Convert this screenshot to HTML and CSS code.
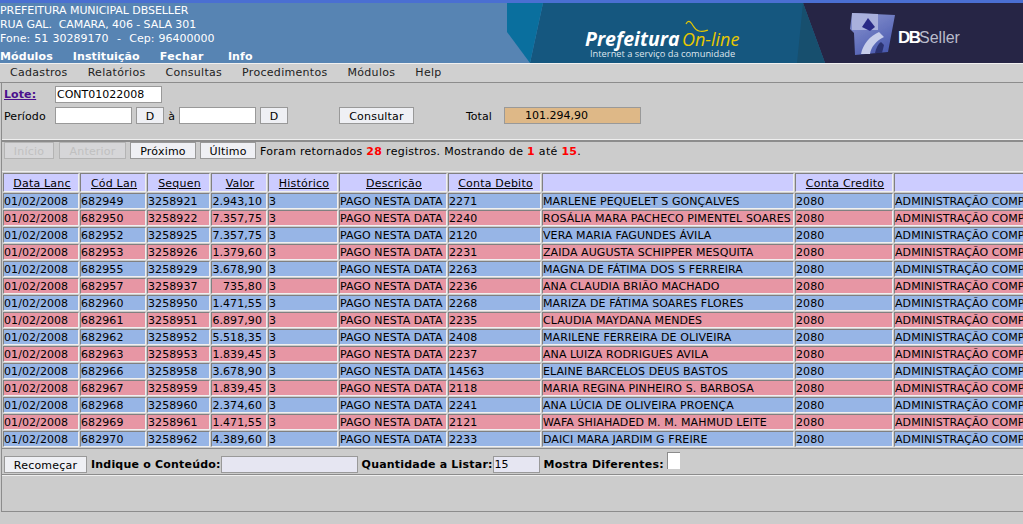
FILE: index.html
```html
<!DOCTYPE html>
<html lang="pt-BR">
<head>
  <meta charset="UTF-8" />
  <title>Prefeitura On-line</title>
  <link rel="stylesheet" href="styles.css">
</head>
<body>
  <div class="topo">
    <div class="topo-info">
      <div class="endereco">
        <div>PREFEITURA MUNICIPAL DBSELLER</div>
        <div>RUA GAL. &nbsp;CAMARA, 406 - SALA 301</div>
        <div class="fone">Fone: 51 30289170 &nbsp;-&nbsp; Cep: 96400000</div>
      </div>
      <div class="menu-topo">
        <span>Módulos</span><span>Instituição</span><span>Fechar</span><span>Info</span>
      </div>
    </div>
    <svg class="banner" width="517" height="60" viewBox="0 0 517 60">
      <defs>
        <filter id="suave"><feGaussianBlur stdDeviation="0.6"/></filter>
        <linearGradient id="logo" x1="0" y1="0" x2="0.6" y2="1">
          <stop offset="0" stop-color="#8e98d2"/>
          <stop offset="1" stop-color="#4c5cb0"/>
        </linearGradient>
      </defs>
      <polygon points="37,0 297,0 319,60 24,60" fill="#15577f"/>
      <polygon points="1,0 37,0 24,60 1,29" fill="#0a6f9e"/>
      <polygon points="297,0 517,0 517,60 319,60" fill="#262545"/>
      <polygon points="297,0 319,60 291,60" fill="#174f6e"/>
      <text x="79" y="43" class="b-pref">Prefeitura</text>
      <text x="176" y="43" class="b-online">On-line</text>
      <path d="M180 21c2-4 4-3 6 0s3 6 7 7 6 0 9-1" fill="none" stroke="#e8c800" stroke-width="1.2"/>
      <text x="84" y="54" class="b-sub">Internet a serviço da comunidade</text>
      <g filter="url(#suave)">
        <polygon points="346,10 389,12 382,49 349,52 348,30 344,26" fill="url(#logo)"/>
        <polygon points="346,10 372,11 372,27 346,27" fill="#a9b0dc"/>
        <polygon points="362,15 369,24 364,28 356,24" fill="#2b2b86"/>
        <path d="M355 51c2-10 9-18 18-22l5 5c-8 4-13 10-14 17z" fill="#c6cdea"/>
        <path d="M369 50c1-5 3-9 6-11l3 3-2 8z" fill="#2c3270"/>
      </g>
      <text x="392" y="40" class="b-db">DB</text>
      <text x="413" y="40" class="b-seller">Seller</text>
    </svg>
  </div>

  <div class="menu">
    <span>Cadastros</span><span>Relatórios</span><span>Consultas</span><span>Procedimentos</span><span>Módulos</span><span>Help</span>
  </div>

  <div class="conteudo">
    <form class="filtro">
      <div class="linha">
        <a class="rotulo lote" href="#">Lote:</a>
        <input class="campo c-lote" value="CONT01022008">
      </div>
      <div class="linha">
        <span class="rotulo desce">Período</span>
        <input class="campo c-data">
        <button type="button" class="btn btn-d">D</button>
        <span class="a-sep desce">à</span>
        <input class="campo c-data">
        <button type="button" class="btn btn-d">D</button>
        <button type="button" class="btn btn-consultar">Consultar</button>
        <span class="total-rotulo desce">Total</span>
        <input class="campo c-total" value="101.294,90">
      </div>
    </form>

    <div class="lista">
      <div class="paginas">
        <button type="button" class="btn off b-inicio">Início</button>
        <button type="button" class="btn off b-anterior">Anterior</button>
        <button type="button" class="btn b-proximo">Próximo</button>
        <button type="button" class="btn b-ultimo">Último</button>
        <span class="resumo">Foram retornados <b>28</b> registros. Mostrando de <b>1</b> até <b>15</b>.</span>
      </div>

      <div class="tabela-box">
        <table class="tabela">
          <thead>
            <tr>
              <th class="w1"><u>Data Lanc</u></th>
              <th class="w2"><u>Cód Lan</u></th>
              <th class="w3"><u>Sequen</u></th>
              <th class="w4"><u>Valor</u></th>
              <th class="w5"><u>Histórico</u></th>
              <th class="w6"><u>Descrição</u></th>
              <th class="w7"><u>Conta Debito</u></th>
              <th class="w8"></th>
              <th class="w9"><u>Conta Credito</u></th>
              <th class="w10"></th>
            </tr>
          </thead>
          <tbody>
            <tr class="az"><td>01/02/2008</td><td>682949</td><td>3258921</td><td class="num">2.943,10</td><td>3</td><td>PAGO NESTA DATA</td><td>2271</td><td>MARLENE PEQUELET S GONÇALVES</td><td>2080</td><td>ADMINISTRAÇÃO COMPA</td></tr>
            <tr class="vm"><td>01/02/2008</td><td>682950</td><td>3258922</td><td class="num">7.357,75</td><td>3</td><td>PAGO NESTA DATA</td><td>2240</td><td>ROSÁLIA MARA PACHECO PIMENTEL SOARES</td><td>2080</td><td>ADMINISTRAÇÃO COMPA</td></tr>
            <tr class="az"><td>01/02/2008</td><td>682952</td><td>3258925</td><td class="num">7.357,75</td><td>3</td><td>PAGO NESTA DATA</td><td>2120</td><td>VERA MARIA FAGUNDES ÁVILA</td><td>2080</td><td>ADMINISTRAÇÃO COMPA</td></tr>
            <tr class="vm"><td>01/02/2008</td><td>682953</td><td>3258926</td><td class="num">1.379,60</td><td>3</td><td>PAGO NESTA DATA</td><td>2231</td><td>ZAIDA AUGUSTA SCHIPPER MESQUITA</td><td>2080</td><td>ADMINISTRAÇÃO COMPA</td></tr>
            <tr class="az"><td>01/02/2008</td><td>682955</td><td>3258929</td><td class="num">3.678,90</td><td>3</td><td>PAGO NESTA DATA</td><td>2263</td><td>MAGNA DE FÁTIMA DOS S FERREIRA</td><td>2080</td><td>ADMINISTRAÇÃO COMPA</td></tr>
            <tr class="vm"><td>01/02/2008</td><td>682957</td><td>3258937</td><td class="num">735,80</td><td>3</td><td>PAGO NESTA DATA</td><td>2236</td><td>ANA CLAUDIA BRIÃO MACHADO</td><td>2080</td><td>ADMINISTRAÇÃO COMPA</td></tr>
            <tr class="az"><td>01/02/2008</td><td>682960</td><td>3258950</td><td class="num">1.471,55</td><td>3</td><td>PAGO NESTA DATA</td><td>2268</td><td>MARIZA DE FÁTIMA SOARES FLORES</td><td>2080</td><td>ADMINISTRAÇÃO COMPA</td></tr>
            <tr class="vm"><td>01/02/2008</td><td>682961</td><td>3258951</td><td class="num">6.897,90</td><td>3</td><td>PAGO NESTA DATA</td><td>2235</td><td>CLAUDIA MAYDANA MENDES</td><td>2080</td><td>ADMINISTRAÇÃO COMPA</td></tr>
            <tr class="az"><td>01/02/2008</td><td>682962</td><td>3258952</td><td class="num">5.518,35</td><td>3</td><td>PAGO NESTA DATA</td><td>2408</td><td>MARILENE FERREIRA DE OLIVEIRA</td><td>2080</td><td>ADMINISTRAÇÃO COMPA</td></tr>
            <tr class="vm"><td>01/02/2008</td><td>682963</td><td>3258953</td><td class="num">1.839,45</td><td>3</td><td>PAGO NESTA DATA</td><td>2237</td><td>ANA LUIZA RODRIGUES AVILA</td><td>2080</td><td>ADMINISTRAÇÃO COMPA</td></tr>
            <tr class="az"><td>01/02/2008</td><td>682966</td><td>3258958</td><td class="num">3.678,90</td><td>3</td><td>PAGO NESTA DATA</td><td>14563</td><td>ELAINE BARCELOS DEUS BASTOS</td><td>2080</td><td>ADMINISTRAÇÃO COMPA</td></tr>
            <tr class="vm"><td>01/02/2008</td><td>682967</td><td>3258959</td><td class="num">1.839,45</td><td>3</td><td>PAGO NESTA DATA</td><td>2118</td><td>MARIA REGINA PINHEIRO S. BARBOSA</td><td>2080</td><td>ADMINISTRAÇÃO COMPA</td></tr>
            <tr class="az"><td>01/02/2008</td><td>682968</td><td>3258960</td><td class="num">2.374,60</td><td>3</td><td>PAGO NESTA DATA</td><td>2241</td><td>ANA LÚCIA DE OLIVEIRA PROENÇA</td><td>2080</td><td>ADMINISTRAÇÃO COMPA</td></tr>
            <tr class="vm"><td>01/02/2008</td><td>682969</td><td>3258961</td><td class="num">1.471,55</td><td>3</td><td>PAGO NESTA DATA</td><td>2121</td><td>WAFA SHIAHADED M. M. MAHMUD LEITE</td><td>2080</td><td>ADMINISTRAÇÃO COMPA</td></tr>
            <tr class="az"><td>01/02/2008</td><td>682970</td><td>3258962</td><td class="num">4.389,60</td><td>3</td><td>PAGO NESTA DATA</td><td>2233</td><td>DAICI MARA JARDIM G FREIRE</td><td>2080</td><td>ADMINISTRAÇÃO COMPA</td></tr>
          </tbody>
        </table>
      </div>

      <div class="rodape">
        <button type="button" class="btn b-recomecar">Recomeçar</button>
        <b class="r1">Indique o Conteúdo:</b>
        <input class="campo lilas c-conteudo">
        <b class="r2">Quantidade a Listar:</b>
        <input class="campo lilas c-qtd" value="15">
        <b class="r3">Mostra Diferentes:</b>
        <span class="check"></span>
      </div>
    </div>
  </div>
</body>
</html>
```

FILE: styles.css
```css
html, body {
  margin: 0;
  height: 524px;
  overflow: hidden;
}
body {
  background: #cccccc;
  font-family: "DejaVu Sans", sans-serif;
  font-size: 11px;
  color: #000;
}
.topo {
  display: flex;
  justify-content: space-between;
  height: 60px;
  background: #5784b3;
  border-top: 3px solid #4a6fd2;
  color: #fff;
}
.topo-info {
  width: 506px;
}
.endereco {
  padding-top: 1px;
  line-height: 14px;
  letter-spacing: -0.07px;
}
.fone {
  word-spacing: 0.7px;
  letter-spacing: 0;
}
.menu-topo {
  display: flex;
  gap: 20px;
  margin-top: 4px;
  font-weight: bold;
  line-height: 13px;
  letter-spacing: 0.1px;
}
.menu-topo span:nth-child(3) {
  letter-spacing: 0.4px;
}
.menu-topo span:last-child {
  margin-left: 4px;
}
.banner {
  display: block;
}
.b-pref {
  font: italic bold 19.5px "Open Sans", sans-serif;
  fill: #fff;
}
.b-online {
  font: italic 18px "Open Sans", sans-serif;
  fill: #e8c800;
}
.b-sub {
  font: 9.3px "Open Sans", sans-serif;
  fill: #dfe6ee;
}
.b-db {
  font: bold 17px "Liberation Sans", sans-serif;
  fill: #fff;
  letter-spacing: -1.5px;
}
.b-seller {
  font: 16px "Liberation Sans", sans-serif;
  fill: #b9bccb;
}
.menu {
  display: flex;
  gap: 20px;
  height: 18px;
  padding-left: 10px;
  border-top: 1px solid #f0f0f0;
  border-bottom: 1px solid #8c8c8c;
  background: #d0d0d0;
  line-height: 18px;
  letter-spacing: 0.3px;
  color: #222;
}
.conteudo {
  margin-left: 1px;
  border-left: 1px solid #8c8c8c;
  border-bottom: 1px solid #8c8c8c;
  height: 428px;
}
.filtro {
  height: 57px;
  padding: 3px 0 0 2px;
  box-sizing: border-box;
}
.linha {
  display: flex;
  align-items: center;
  height: 17px;
  margin-bottom: 4px;
}
.rotulo {
  width: 51px;
  letter-spacing: 0.1px;
}
.desce {
  padding-top: 1px;
}
.lote {
  font-weight: bold;
  color: #4b0f8c;
}
.campo {
  box-sizing: border-box;
  height: 17px;
  margin: 0;
  padding: 0 1px;
  border: 1px solid #999;
  background: #fff;
  font: 11px "DejaVu Sans", sans-serif;
}
.c-lote {
  width: 107px;
}
.c-data {
  width: 77px;
}
.c-total {
  width: 137px;
  padding-left: 20px;
  background: #deb887;
}
.btn {
  box-sizing: border-box;
  height: 17px;
  margin: 0;
  padding: 1px 0 0;
  border: 1px solid #999;
  background: #eff0f4;
  font: 11px "DejaVu Sans", sans-serif;
  letter-spacing: 0.2px;
  color: #000;
}
.btn-d {
  width: 28px;
  margin-left: 4px;
}
.a-sep {
  width: 15px;
  text-align: center;
}
.btn-consultar {
  width: 75px;
  margin-left: 51px;
}
.total-rotulo {
  margin-left: 52px;
  width: 38px;
}
.lista {
  border-top: 2px solid #8c8c8c;
  box-shadow: 0 -1px 0 #efefef;
}
.paginas {
  display: flex;
  align-items: center;
  height: 17px;
  padding-left: 2px;
  margin-bottom: 12px;
}
.b-inicio { width: 50px; margin-right: 5px; }
.b-anterior { width: 67px; margin-right: 4px; }
.b-proximo { width: 66px; margin-right: 4px; }
.b-ultimo { width: 56px; margin-right: 4px; }
.off {
  color: #c0c0c0;
  background: #d6d6d8;
  border-color: #b4b4b4;
}
.resumo {
  padding-top: 2px;
  white-space: nowrap;
  letter-spacing: 0.3px;
}
.resumo b {
  color: #f00;
}
.tabela-box {
  overflow: hidden;
  border-top: 1px solid #efefef;
  border-bottom: 1px solid #8c8c8c;
  width: 1021px;
}
.tabela {
  table-layout: fixed;
  width: 1143px;
  border-collapse: separate;
  border-spacing: 1px;
}
.tabela th,
.tabela td {
  box-sizing: border-box;
  padding: 0;
  overflow: hidden;
  white-space: nowrap;
  border: 1px solid;
  border-color: #808080 #f0f0f0 #f0f0f0 #808080;
}
.tabela th {
  height: 19px;
  padding: 1px 0 0 2px;
  background: #ccccff;
  font-weight: normal;
  letter-spacing: 0.2px;
}
.tabela td {
  height: 16px;
  padding-top: 1px;
  line-height: 13px;
  letter-spacing: 0.08px;
}
.tabela td.num {
  text-align: right;
  padding-right: 4px;
}
.az td { background: #97b5e6; }
.vm td { background: #e796a4; }
.w1 { width: 76px; }
.w2 { width: 66px; }
.w3 { width: 63px; }
.w4 { width: 56px; }
.w5 { width: 70px; }
.w6 { width: 108px; }
.w7 { width: 93px; }
.w8 { width: 252px; }
.w9 { width: 98px; }
.w10 { width: 250px; }
.rodape {
  display: flex;
  align-items: center;
  height: 19px;
  padding: 6px 0 0 2px;
  border-bottom: 1px solid #8c8c8c;
  box-shadow: 0 1px 0 #efefef;
  white-space: nowrap;
  letter-spacing: 0.2px;
}
.b-recomecar { width: 83px; margin-right: 4px; }
.lilas { background: #e6e6f2; }
.c-conteudo { width: 137px; }
.r2 { margin-left: 4px; }
.c-qtd { width: 47px; }
.r3 { margin-left: 4px; margin-right: 3px; }
.check {
  display: block;
  box-sizing: border-box;
  align-self: flex-start;
  width: 13px;
  height: 17px;
  margin-top: -3px;
  background: #fff;
  border-top: 1px solid #8c8c8c;
  border-left: 1px solid #8c8c8c;
}
```
